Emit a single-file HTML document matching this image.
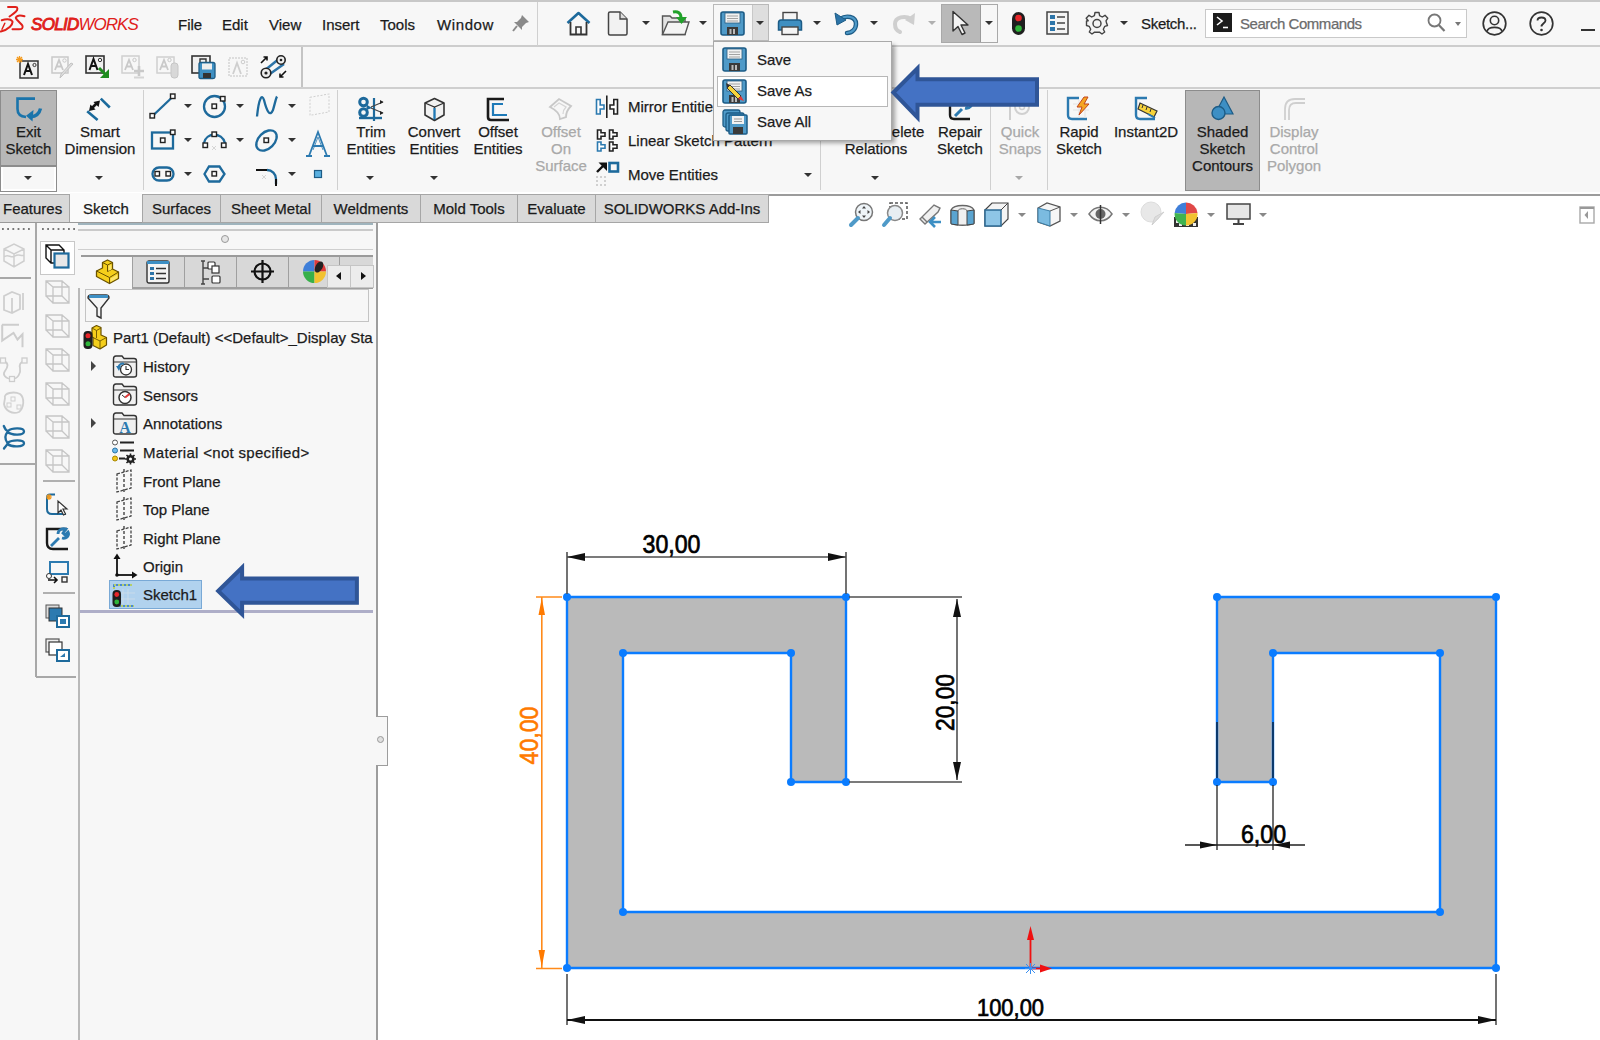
<!DOCTYPE html>
<html><head><meta charset="utf-8">
<style>
*{margin:0;padding:0;box-sizing:border-box}
html,body{width:1600px;height:1040px;overflow:hidden;background:#f7f7f7;font-family:"Liberation Sans",sans-serif;color:#1b1b1b}
.a{position:absolute}
.hl{position:absolute;height:1px;background:#c4c4c4}
.vl{position:absolute;width:1px;background:#c4c4c4}
.t{position:absolute;white-space:nowrap;font-size:15px;line-height:17px;-webkit-text-stroke:0.25px currentColor}
.c{text-align:center}
.g{color:#a9a9a9}
.dd{position:absolute;width:0;height:0;border-left:4px solid transparent;border-right:4px solid transparent;border-top:4px solid #333}
.tab{position:absolute;top:194px;height:29px;background:#d9d9d9;border:1px solid #a6a6a6;font-size:15px;line-height:27px;text-align:center;white-space:nowrap;-webkit-text-stroke:0.25px currentColor}
svg{position:absolute;overflow:visible}
</style></head><body>
<!-- top border -->
<div class="a" style="left:0;top:0;width:1600px;height:2px;background:#c8c8c8"></div>
<!-- top bar -->
<div class="hl" style="left:0;top:45px;width:1600px;height:2px;background:#cdcdcd"></div>
<div class="vl" style="left:537px;top:2px;height:44px;background:#d0d0d0"></div>
<!-- second row -->
<div class="vl" style="left:301px;top:47px;height:42px;width:2px;background:#c4c4c4"></div>
<div class="hl" style="left:0;top:87px;width:1600px;height:2px;background:#cfcfcf"></div>
<!-- ribbon bottom -->
<div class="hl" style="left:0;top:192px;width:1600px;height:2px;background:#fff"></div><div class="hl" style="left:0;top:194px;width:1600px;height:2px;background:#9c9c9c"></div>
<!-- graphics area -->
<div class="a" style="left:377px;top:196px;width:1223px;height:844px;background:#fff"></div>


<!-- ===== TOP BAR ===== -->
<svg style="left:0;top:0" width="30" height="36" viewBox="0 0 30 36">
 <g fill="none" stroke="#e0201a" stroke-linecap="round">
 <path d="M8 7 H15.5 C18 7 18 9.5 16 11.5 C14 13.5 11.5 15 9.5 16.5" stroke-width="1.9"/>
 <path d="M1.8 20.3 C5 19.2 10.5 18.6 12.3 21.2 C13.6 24.5 8 29.8 0.8 31.5" stroke-width="2"/>
 <path d="M4.8 23.2 L2 29.2" stroke-width="1.5"/>
 <path d="M24.5 16.3 C21.5 15.3 17.2 15 15.8 17.6 C16 20 21.2 23.2 22.4 25.6 C23.3 28 22 29.3 19 29.3 H12.5" stroke-width="2"/>
 </g>
</svg>
<div class="t" style="left:31px;top:15px;font-size:17px;line-height:20px;color:#e0201a;font-style:italic;letter-spacing:-1px;-webkit-text-stroke:0"><span style="-webkit-text-stroke:0.9px #e0201a;letter-spacing:-0.7px">SOLID</span>WORKS</div>
<div class="t" style="left:178px;top:16px">File</div>
<div class="t" style="left:222px;top:16px">Edit</div>
<div class="t" style="left:269px;top:16px">View</div>
<div class="t" style="left:322px;top:16px">Insert</div>
<div class="t" style="left:380px;top:16px">Tools</div>
<div class="t" style="left:437px;top:16px;letter-spacing:0.6px">Window</div>
<!-- pin -->
<svg style="left:512px;top:14px" width="18" height="18" viewBox="0 0 18 18">
 <path d="M10 1 L17 8 L14 9 L10 13 L10 16 L2 8 L5 8 L9 4 Z" fill="#8a8a8a"/><path d="M5 12 L1 17" stroke="#8a8a8a" stroke-width="2"/>
</svg>
<!-- home -->
<svg style="left:566px;top:11px" width="25" height="25" viewBox="0 0 25 25">
 <path d="M1.5 12 L12.5 2 L23.5 12" fill="none" stroke="#1d6a9c" stroke-width="2.6" stroke-linejoin="round"/>
 <path d="M4.5 11 V23.5 H20.5 V11" fill="none" stroke="#333" stroke-width="1.8"/>
 <path d="M10 23.5 V16 H15 V23.5" fill="none" stroke="#333" stroke-width="1.6"/>
</svg>
<!-- new doc -->
<svg style="left:607px;top:11px" width="22" height="25" viewBox="0 0 22 25">
 <path d="M1.5 2.5 Q1.5 1 3 1 H13 L20 8 V22.5 Q20 24 18.5 24 H3 Q1.5 24 1.5 22.5 Z" fill="#f2f2f2" stroke="#444" stroke-width="1.5"/>
 <path d="M13 1 V8 H20" fill="#ddd" stroke="#444" stroke-width="1.3"/>
</svg>
<div class="dd" style="left:642px;top:21px"></div>
<!-- open -->
<svg style="left:661px;top:10px" width="30" height="26" viewBox="0 0 30 26">
 <path d="M1.5 6 H9 L11 8 H24 V24.5 H1.5 Z" fill="#e3e3e3" stroke="#555" stroke-width="1.4"/>
 <path d="M1.5 24.5 L7 12 H28 L24 24.5 Z" fill="#f4f4f4" stroke="#555" stroke-width="1.4"/>
 <path d="M12 2 C17 1 20 3 20 8" fill="none" stroke="#21a12a" stroke-width="3"/>
 <path d="M15 7 L20.5 14 L26 7 Z" fill="#21a12a"/>
</svg>
<div class="dd" style="left:699px;top:21px"></div>
<!-- save button (pressed) -->
<div class="a" style="left:713px;top:4px;width:56px;height:37px;border:1px solid #b9b9b9;background:#f7f7f7"></div>
<div class="a" style="left:752px;top:5px;width:16px;height:35px;background:#dedede;border-left:1px solid #c8c8c8"></div>
<svg style="left:720px;top:11px" width="25" height="25" viewBox="0 0 25 25">
 <path d="M1 3 Q1 1 3 1 H22 Q24 1 24 3 V22 Q24 24 22 24 H3 Q1 24 1 22 Z" fill="#4f9ac8" stroke="#1d5c86" stroke-width="1.6"/>
 <rect x="5" y="2" width="15" height="10" fill="#f2f2f2" stroke="#2a5d80" stroke-width="0.8"/>
 <path d="M7 5 H18 M7 7.5 H18 M7 10 H18" stroke="#999" stroke-width="0.9"/>
 <rect x="7" y="16" width="11" height="8" fill="#3a3a3a"/>
 <rect x="9.5" y="18" width="2" height="5" fill="#bbb"/><rect x="13" y="18" width="2" height="5" fill="#bbb"/>
</svg>
<div class="dd" style="left:756px;top:21px"></div>
<!-- print -->
<svg style="left:777px;top:11px" width="26" height="25" viewBox="0 0 26 25">
 <rect x="6" y="1.5" width="14" height="9" fill="#f4f4f4" stroke="#444" stroke-width="1.4"/>
 <path d="M1.5 12 Q1.5 9 4 9 H22 Q24.5 9 24.5 12 V19 H1.5 Z" fill="#3e8fc2" stroke="#1d5c86" stroke-width="1.5"/>
 <rect x="5" y="16" width="16" height="7.5" fill="#f4f4f4" stroke="#444" stroke-width="1.4"/>
</svg>
<div class="dd" style="left:813px;top:21px"></div>
<!-- undo -->
<svg style="left:834px;top:11px" width="25" height="24" viewBox="0 0 25 24">
 <path d="M6 8 C12 4 22 5 22 13 C22 18 18 22 13 22" fill="none" stroke="#1d5c86" stroke-width="4.5" stroke-linecap="round"/>
 <path d="M6 8 C12 4 22 5 22 13 C22 18 18 22 13 22" fill="none" stroke="#4f9ac8" stroke-width="2.2" stroke-linecap="round"/>
 <path d="M1 2 L3 14 L12 9 Z" fill="#2c74a8" stroke="#1d5c86" stroke-width="1"/>
</svg>
<div class="dd" style="left:870px;top:21px"></div>
<!-- redo gray -->
<svg style="left:892px;top:11px" width="24" height="24" viewBox="0 0 24 24">
 <path d="M19 8 C13 4 3 6 3 13 C3 17 5 20 8 21" fill="none" stroke="#cfcfcf" stroke-width="4" stroke-linecap="round"/>
 <path d="M23 2 L22 14 L13 9 Z" fill="#cfcfcf"/>
</svg>
<div class="dd" style="left:928px;top:21px;border-top-color:#b0b0b0"></div>
<!-- select button -->
<div class="a" style="left:941px;top:4px;width:57px;height:39px;border:1px solid #a9a9a9;background:#f7f7f7"></div>
<div class="a" style="left:942px;top:5px;width:39px;height:37px;background:#b9b9b9;border-right:1px solid #9a9a9a"></div>
<svg style="left:951px;top:10px" width="20" height="26" viewBox="0 0 20 26">
 <path d="M2 1.5 V21 L7 16.5 L11 24.5 L14 23 L10 15 H17 Z" fill="#f4f4f4" stroke="#333" stroke-width="1.4" stroke-linejoin="round"/>
</svg>
<div class="dd" style="left:985px;top:21px"></div>
<!-- traffic light -->
<svg style="left:1011px;top:11px" width="15" height="25" viewBox="0 0 15 25">
 <rect x="1" y="1" width="13" height="23" rx="6.5" fill="#1f1f1f"/>
 <circle cx="7.5" cy="7" r="3.3" fill="#e8262a"/><circle cx="7.5" cy="17.5" r="3.3" fill="#2fb53a"/>
</svg>
<!-- list -->
<svg style="left:1046px;top:11px" width="23" height="24" viewBox="0 0 23 24">
 <rect x="1" y="1" width="21" height="22" fill="#f4f4f4" stroke="#444" stroke-width="1.5"/>
 <rect x="4" y="4" width="5" height="4" fill="#2c74a8"/><rect x="4" y="10" width="5" height="4" fill="#2c74a8"/><rect x="4" y="16" width="5" height="4" fill="#2c74a8"/>
 <path d="M11 6 H19 M11 12 H19 M11 18 H19" stroke="#444" stroke-width="1.5"/>
</svg>
<!-- gear -->
<svg style="left:1085px;top:11px" width="24" height="24" viewBox="0 0 24 24">
 <path d="M10 1.5 H14 L14.6 4.6 L17.3 6 L20 4.3 L22.8 7.2 L21 9.8 L21.7 12.6 L22.5 14.5 L19.8 15.3 L18.3 18.2 L19.7 21 L17 23 L14.4 21.2 H9.6 L7 23 L4.3 21 L5.7 18.2 L4.2 15.3 L1.5 14.5 V10 L3.2 9.8 L1.2 7.2 L4 4.3 L6.7 6 L9.4 4.6 Z" fill="#f4f4f4" stroke="#444" stroke-width="1.4" stroke-linejoin="round"/>
 <circle cx="12" cy="12.5" r="4" fill="none" stroke="#444" stroke-width="1.5"/>
</svg>
<div class="dd" style="left:1120px;top:21px"></div>
<div class="t" style="left:1141px;top:15px;letter-spacing:-0.3px">Sketch...</div>
<!-- search box -->
<div class="a" style="left:1205px;top:9px;width:262px;height:29px;background:#fff;border:1px solid #c9c9c9"></div>
<svg style="left:1213px;top:13px" width="19" height="19" viewBox="0 0 19 19">
 <rect x="0" y="0" width="19" height="19" fill="#1c1c1c"/>
 <path d="M4 4 L9 8 L4 12" fill="none" stroke="#fff" stroke-width="1.6"/><path d="M10 14.5 H15" stroke="#fff" stroke-width="1.6"/>
</svg>
<div class="t" style="left:1240px;top:15px;color:#6b6b6b;letter-spacing:-0.45px">Search Commands</div>
<svg style="left:1427px;top:13px" width="19" height="20" viewBox="0 0 19 20">
 <circle cx="7.5" cy="7.5" r="6" fill="none" stroke="#777" stroke-width="1.8"/><path d="M11.8 12 L17.5 18" stroke="#777" stroke-width="2.2"/>
</svg>
<div class="dd" style="left:1455px;top:22px;border-left-width:3.5px;border-right-width:3.5px;border-top-width:4px;border-top-color:#777"></div>
<!-- user -->
<svg style="left:1482px;top:11px" width="25" height="25" viewBox="0 0 25 25">
 <circle cx="12.5" cy="12.5" r="11.3" fill="none" stroke="#333" stroke-width="1.7"/>
 <circle cx="12.5" cy="9.5" r="4.2" fill="none" stroke="#333" stroke-width="1.6"/>
 <path d="M5 20.5 C6 15 19 15 20 20.5" fill="none" stroke="#333" stroke-width="1.6"/>
</svg>
<!-- help -->
<svg style="left:1529px;top:11px" width="25" height="25" viewBox="0 0 25 25">
 <circle cx="12.5" cy="12.5" r="11.3" fill="none" stroke="#333" stroke-width="1.7"/>
 <path d="M8.5 9.5 C8.5 5.5 16.5 5.5 16.5 9.5 C16.5 12 12.5 12.5 12.5 15.5" fill="none" stroke="#333" stroke-width="1.8"/>
 <circle cx="12.5" cy="19" r="1.3" fill="#333"/>
</svg>
<div class="a" style="left:1581px;top:29px;width:14px;height:2px;background:#333"></div>


<!-- ===== SECOND ROW ===== -->
<svg style="left:15px;top:55px" width="25" height="24" viewBox="0 0 25 24">
 <rect x="5" y="6" width="18" height="17" fill="#f0f0f0" stroke="#333" stroke-width="1.5"/>
 <path d="M9 20 L13 9 L17 20 M10.5 16 H15.5" fill="none" stroke="#111" stroke-width="2"/><circle cx="19.5" cy="10" r="1.6" fill="none" stroke="#333" stroke-width="1"/>
 <path d="M4.5 1 V8 M1 4.5 H8 M2 2 L7 7 M7 2 L2 7" stroke="#f39a1e" stroke-width="1.3"/>
</svg>
<svg style="left:51px;top:55px" width="24" height="24" viewBox="0 0 24 24">
 <rect x="1" y="2" width="16" height="16" fill="none" stroke="#c9c9c9" stroke-width="1.5"/>
 <path d="M4 15 L8 5 L12 15 M5.5 11.5 H10.5" fill="none" stroke="#c9c9c9" stroke-width="1.8"/><circle cx="13.5" cy="5.5" r="1.7" fill="none" stroke="#c9c9c9"/><path d="M22 9 L11 21 L9 23 L10 19 L20 8 Z" fill="#ddd" stroke="#c3c3c3" stroke-width="1"/>
</svg>
<svg style="left:85px;top:55px" width="25" height="24" viewBox="0 0 25 24">
 <rect x="1" y="1" width="18" height="17" fill="#f0f0f0" stroke="#333" stroke-width="1.6"/>
 <path d="M4.5 15 L8.5 4 L12.5 15 M6 11 H11" fill="none" stroke="#111" stroke-width="2"/><circle cx="15" cy="5" r="1.7" fill="none" stroke="#333" stroke-width="1"/>
 <path d="M14 13 L21 20" stroke="#1e8c1e" stroke-width="3"/><path d="M24 14 V23 H15 Z" fill="#1e8c1e"/>
</svg>
<svg style="left:121px;top:55px" width="24" height="24" viewBox="0 0 24 24">
 <rect x="1" y="1" width="17" height="17" fill="none" stroke="#d0d0d0" stroke-width="1.5"/>
 <path d="M4 15 L8 5 L12 15 M5.5 11.5 H10.5" fill="none" stroke="#c9c9c9" stroke-width="1.8"/><circle cx="13.5" cy="5" r="1.7" fill="none" stroke="#c9c9c9"/><path d="M13 16 H23 M18 11 V21" stroke="#c9c9c9" stroke-width="2.6"/><path d="M13 22.5 H23" stroke="#d5d5d5" stroke-width="2"/>
</svg>
<svg style="left:156px;top:55px" width="24" height="24" viewBox="0 0 24 24">
 <rect x="1" y="2" width="17" height="16" fill="none" stroke="#d0d0d0" stroke-width="1.5"/>
 <path d="M4 15 L8 5 L12 15 M5.5 11.5 H10.5" fill="none" stroke="#c9c9c9" stroke-width="1.8"/><circle cx="13.5" cy="5" r="1.7" fill="none" stroke="#c9c9c9"/><rect x="15" y="8" width="7" height="15" rx="3" fill="#d8d8d8" stroke="#c6c6c6"/>
</svg>
<svg style="left:191px;top:55px" width="25" height="24" viewBox="0 0 25 24">
 <rect x="1" y="1" width="18" height="17" fill="#f0f0f0" stroke="#333" stroke-width="1.6"/>
 <path d="M9 8 V4 H15 V8" fill="none" stroke="#333" stroke-width="1.4"/>
 <path d="M8 9 Q8 7.5 9.5 7.5 H22 Q24 7.5 24 9.5 V22 Q24 23.5 22 23.5 H9.5 Q8 23.5 8 22 Z" fill="#3e8fc2" stroke="#1d5c86" stroke-width="1.3"/>
 <rect x="11" y="8.5" width="10" height="6" fill="#eee"/><rect x="12" y="18" width="8" height="5" fill="#333"/>
</svg>
<svg style="left:226px;top:55px" width="24" height="24" viewBox="0 0 24 24">
 <rect x="3" y="3" width="18" height="18" fill="none" stroke="#d5d5d5" stroke-width="1.5" stroke-dasharray="2 1"/>
 <path d="M7 19 L11 8 L15 19" fill="none" stroke="#cfcfcf" stroke-width="1.8"/><circle cx="17" cy="7" r="1.8" fill="none" stroke="#ccc"/>
</svg>
<svg style="left:260px;top:54px" width="27" height="25" viewBox="0 0 27 25">
 <path d="M4 17 L20 4 M7 22 L24 10" stroke="#2c74a8" stroke-width="2.5"/>
 <circle cx="21" cy="6" r="4.2" fill="#eee" stroke="#222" stroke-width="1.6"/><circle cx="21" cy="6" r="1.3" fill="#222"/>
 <circle cx="6" cy="19" r="4.8" fill="#eee" stroke="#222" stroke-width="1.6"/><circle cx="6" cy="19" r="1.6" fill="#222"/>
 <path d="M1 9 L7 3 M3.5 3 H7 V6.5" fill="none" stroke="#111" stroke-width="1.6"/><path d="M26 17 L20 23 M20 19.5 V23 H23.5" fill="none" stroke="#111" stroke-width="1.6"/>
</svg>

<!-- ===== RIBBON ===== -->
<!-- Exit sketch -->
<div class="a" style="left:0;top:90px;width:57px;height:102px;border:1.5px solid #8c8c8c;background:#f7f7f7;box-shadow:inset 0 0 0 2px #fff"></div>
<div class="a" style="left:1px;top:91px;width:55px;height:76px;background:#b7b7b7;border-bottom:2px solid #8c8c8c"></div>
<svg style="left:16px;top:96px" width="26" height="26" viewBox="0 0 26 26">
 <path d="M19 2.6 H1.5 V13 C1.5 18 4 20.5 10 21" fill="none" stroke="#1a74ab" stroke-width="2.6"/>
 <path d="M10 19.8 L17.5 14 L16.5 25.5 Z" fill="#1a74ab"/><path d="M14.5 20.5 C19.5 21 23.5 17.5 24.5 12.5" fill="none" stroke="#1a74ab" stroke-width="3.4"/>
</svg>
<div class="t c" style="left:0;top:123px;width:57px">Exit</div>
<div class="t c" style="left:0;top:140px;width:57px">Sketch</div>
<div class="dd" style="left:24px;top:176px"></div>
<!-- Smart Dimension -->
<svg style="left:86px;top:96px" width="26" height="26" viewBox="0 0 26 26">
 <path d="M1.2 15.2 L11.6 24" stroke="#1a6a9c" stroke-width="2.6"/><path d="M14.8 2.6 L23.8 11.5" stroke="#1a6a9c" stroke-width="2.6"/>
 <path d="M6 12 L10.5 7.5" stroke="#111" stroke-width="2.6"/>
 <path d="M3 15 L9.6 13.6 L4.4 8.4 Z M14 4.5 L12.6 11.1 L7.4 5.9 Z" fill="#111"/>
</svg>
<div class="t c" style="left:60px;top:123px;width:80px">Smart</div>
<div class="t c" style="left:60px;top:140px;width:80px">Dimension</div>
<div class="dd" style="left:95px;top:176px"></div>
<div class="vl" style="left:143px;top:90px;height:100px;background:#d0d0d0"></div>

<!-- sketch tools grid -->
<svg style="left:148px;top:92px" width="190" height="98" viewBox="148 92 190 98">
 <g fill="none" stroke="#1e6a9c" stroke-width="2.3">
  <path d="M152 116.5 L173 96.5"/>
  <circle cx="214.5" cy="106.5" r="10.5"/>
  <path d="M257 116.5 C259 97 262 94 264 100 C267 112 270 117 273 110 C275 103 276 98 277 96.5"/>
  <rect x="152" y="132.5" width="21" height="16"/>
  <path d="M204 143 C206 132 222 132 225 143"/>
  <ellipse cx="266.5" cy="140.5" rx="12" ry="8" transform="rotate(-45 266.5 140.5)"/>
  <rect x="152.5" y="167.5" width="21" height="13" rx="6.5"/>
  <path d="M204.5 174 L209 166.5 H219.5 L224.5 174 L219.5 181.5 H209 Z"/>
  <path d="M267 170 C272 170 276 174 276 179 V184"/>
 </g>
 <g fill="#fff" stroke="#222" stroke-width="1.4">
  <rect x="150" y="113.5" width="4.5" height="4.5"/><rect x="170.5" y="94" width="4.5" height="4.5"/>
  <rect x="212" y="104" width="4.5" height="4.5"/><rect x="220.5" y="96.5" width="4.5" height="4.5"/>
  <rect x="170.5" y="130" width="4.5" height="4.5"/><rect x="160.5" y="138" width="4.5" height="4.5"/>
  <rect x="212" y="132" width="4.5" height="4.5"/><rect x="203" y="143" width="4.5" height="4.5"/><rect x="221.5" y="143" width="4.5" height="4.5"/>
  <rect x="264" y="138" width="4.5" height="4.5"/>
  <rect x="155" y="171.5" width="4.5" height="4.5"/><rect x="166" y="171.5" width="4.5" height="4.5"/>
  <rect x="212" y="171.5" width="4.5" height="4.5"/>
 </g>
 <path d="M256 170 H267" stroke="#111" stroke-width="2"/><path d="M276 179 V186" stroke="#111" stroke-width="2"/>
 <path d="M262 175 L266 179 M266 175 L262 179 M212 146 L216 150 M216 146 L212 150" stroke="#ccc" stroke-width="0.8"/>
 <rect x="310" y="97" width="19" height="18" fill="none" stroke="#cfcfcf" stroke-dasharray="2 1.5" transform="skewY(-10) translate(0 55)"/>
 <path d="M309 156 L318 132 L327 156 M306 156 H312 M324 156 H330 M313 146 H323" fill="none" stroke="#2c7ab0" stroke-width="1.8"/>
 <path d="M313 150 L318 137 L323 150" fill="none" stroke="#2c7ab0" stroke-width="0.8"/>
 <rect x="314.5" y="170.5" width="7" height="7" fill="#5ab0e0" stroke="#1d5c86" stroke-width="1.2"/>
</svg>
<div class="dd" style="left:184px;top:104px"></div><div class="dd" style="left:236px;top:104px"></div><div class="dd" style="left:288px;top:104px"></div>
<div class="dd" style="left:184px;top:138px"></div><div class="dd" style="left:236px;top:138px"></div><div class="dd" style="left:288px;top:138px"></div>
<div class="dd" style="left:184px;top:172px"></div><div class="dd" style="left:288px;top:172px"></div>
<div class="vl" style="left:337px;top:90px;height:100px;background:#d0d0d0"></div>

<!-- Trim / Convert / Offset -->
<svg style="left:358px;top:97px" width="26" height="26" viewBox="0 0 26 26">
 <path d="M16 1 V24" stroke="#1e6a9c" stroke-width="2.2"/><path d="M1 21 H24" stroke="#1e6a9c" stroke-width="2.4"/>
 <circle cx="5.5" cy="5" r="3.8" fill="none" stroke="#1e6a9c" stroke-width="3"/><circle cx="5.5" cy="15.5" r="3.8" fill="none" stroke="#1e6a9c" stroke-width="3"/>
 <path d="M8.5 7.5 L14 11 L8.5 13 Z" fill="#1e6a9c"/>
 <path d="M13 10 L25 5 M13 11 L25 16" stroke="#444" stroke-width="1.2"/><path d="M22 3 L25.5 5 L22 7 Z M22 14 L25.5 16 L22 18 Z" fill="#222"/>
</svg>
<div class="t c" style="left:336px;top:123px;width:70px">Trim</div>
<div class="t c" style="left:336px;top:140px;width:70px">Entities</div>
<div class="dd" style="left:366px;top:176px"></div>
<svg style="left:423px;top:97px" width="23" height="25" viewBox="0 0 23 25">
 <path d="M2 6 L11.5 1.5 L21 6 V18 L11.5 23.5 L2 18 Z" fill="#f2f2f2" stroke="#333" stroke-width="1.6" stroke-linejoin="round"/>
 <path d="M2 6 L11.5 10 L21 6 M11.5 10 V23.5" fill="none" stroke="#333" stroke-width="1.3"/><path d="M11.5 11 V22.5" stroke="#1e7ab8" stroke-width="2.2"/>
</svg>
<div class="t c" style="left:399px;top:123px;width:70px">Convert</div>
<div class="t c" style="left:399px;top:140px;width:70px">Entities</div>
<div class="dd" style="left:430px;top:176px"></div>
<svg style="left:486px;top:97px" width="25" height="25" viewBox="0 0 25 25">
 <path d="M18 2 H2 V20 Q2 23 5 23 H23" fill="none" stroke="#1a1a1a" stroke-width="2.6"/>
 <path d="M17 7 H7 V18 H21" fill="none" stroke="#1e7ab8" stroke-width="2.2"/>
</svg>
<div class="t c" style="left:463px;top:123px;width:70px">Offset</div>
<div class="t c" style="left:463px;top:140px;width:70px">Entities</div>
<!-- Offset on surface (gray) -->
<svg style="left:548px;top:97px" width="25" height="24" viewBox="0 0 25 24">
 <path d="M2 10 L11 2 L23 9 C20 12 18 15 18 20 L12 22 C12 17 8 13 2 10 Z" fill="none" stroke="#c8c8c8" stroke-width="1.8"/>
 <path d="M6 10 L11 6 L18 10 C16 12 15 14 15 17" fill="none" stroke="#d5d5d5" stroke-width="1.2"/>
</svg>
<div class="t c g" style="left:526px;top:123px;width:70px">Offset</div>
<div class="t c g" style="left:526px;top:140px;width:70px">On</div>
<div class="t c g" style="left:526px;top:157px;width:70px">Surface</div>
<!-- Mirror / Linear / Move -->
<svg style="left:595px;top:95px" width="25" height="24" viewBox="0 0 25 24">
 <path d="M11.8 0.5 V23" stroke="#222" stroke-width="1.6"/>
 <path d="M1.5 4.5 H5.2 V10 H9 V14 H5.2 V19 H1.5 Z" fill="#fff" stroke="#2c7ab0" stroke-width="1.6"/>
 <path d="M22.5 4.5 H18.8 V10 H15 V14 H18.8 V19 H22.5 Z" fill="#fff" stroke="#222" stroke-width="1.6"/>
</svg>
<div class="t" style="left:628px;top:98px">Mirror Entities</div>
<svg style="left:596px;top:129px" width="24" height="24" viewBox="0 0 24 24">
 <g fill="#fff" stroke-width="1.6">
 <path d="M1.5 1 H5 V3.8 H9 V7.2 H5 V10 H1.5 Z" stroke="#222"/><path d="M13.5 1 H17 V3.8 H21 V7.2 H17 V10 H13.5 Z" stroke="#222"/>
 <path d="M1.5 13 H5 V15.8 H9 V19.2 H5 V22 H1.5 Z" stroke="#2c7ab0"/><path d="M13.5 13 H17 V15.8 H21 V19.2 H17 V22 H13.5 Z" stroke="#222"/></g>
</svg>
<div class="t" style="left:628px;top:132px">Linear Sketch Pattern</div>
<svg style="left:595px;top:161px" width="25" height="27" viewBox="0 0 25 27">
 <path d="M2 11 L9.5 3.5" stroke="#111" stroke-width="2.4"/><path d="M3.5 1.5 H12 V10 Z" fill="#111"/>
 <rect x="14.5" y="2" width="8.5" height="8.5" fill="none" stroke="#1d6a9c" stroke-width="2.6"/>
 <g fill="#d0d0d0"><rect x="1" y="15" width="2" height="2"/><rect x="5" y="15" width="2" height="2"/><rect x="9" y="15" width="2" height="2"/><rect x="1" y="19" width="2" height="2"/><rect x="9" y="19" width="2" height="2"/><rect x="1" y="23" width="2" height="2"/><rect x="5" y="23" width="2" height="2"/><rect x="9" y="23" width="2" height="2"/></g>
</svg>
<div class="t" style="left:628px;top:166px">Move Entities</div>
<div class="dd" style="left:804px;top:173px"></div>
<div class="vl" style="left:820px;top:90px;height:100px;background:#d0d0d0"></div>
<!-- Display/Delete relations (partially hidden) -->
<svg style="left:862px;top:96px" width="25" height="25" viewBox="0 0 25 25">
 <rect x="3" y="3" width="19" height="19" fill="none" stroke="#2c7ab0" stroke-width="2"/>
</svg>
<div class="t c" style="left:826px;top:123px;width:100px">Display/Delete</div>
<div class="t c" style="left:836px;top:140px;width:80px">Relations</div>
<div class="dd" style="left:871px;top:176px"></div>
<!-- Repair sketch -->
<svg style="left:947px;top:96px" width="26" height="26" viewBox="0 0 26 26">
 <path d="M3 3 V19 Q3 23 7 23 H23" fill="none" stroke="#1a1a1a" stroke-width="2.4"/>
 <path d="M8 20 L15 13 M13 7 C13 3 18 1 22 3 L18 7 L20 9 L24 5 C26 9 23 13 18 12" fill="none" stroke="#2c7ab0" stroke-width="3"/>
</svg>
<div class="t c" style="left:920px;top:123px;width:80px">Repair</div>
<div class="t c" style="left:920px;top:140px;width:80px">Sketch</div>
<div class="vl" style="left:990px;top:90px;height:100px;background:#d0d0d0"></div>
<!-- Quick snaps gray -->
<svg style="left:1007px;top:96px" width="26" height="26" viewBox="0 0 26 26">
 <path d="M3 2 V24" stroke="#cfcfcf" stroke-width="2"/><circle cx="15" cy="11" r="7" fill="none" stroke="#d0d0d0" stroke-width="2"/><circle cx="15" cy="11" r="2.5" fill="none" stroke="#d0d0d0" stroke-width="1.5"/>
</svg>
<div class="t c g" style="left:980px;top:123px;width:80px">Quick</div>
<div class="t c g" style="left:980px;top:140px;width:80px">Snaps</div>
<div class="dd" style="left:1015px;top:176px;border-top-color:#a8a8a8"></div>
<div class="vl" style="left:1047px;top:90px;height:100px;background:#d0d0d0"></div>
<!-- Rapid Sketch -->
<svg style="left:1065px;top:96px" width="27" height="26" viewBox="0 0 27 26">
 <path d="M14 2 H3 V19 Q3 23 7 23 H22" fill="none" stroke="#2c7ab0" stroke-width="2.4"/>
 <path d="M8 8 H24 M8 14 H24 M14 4 V22 M20 4 V22" stroke="#e3e3e3" stroke-width="1"/>
 <path d="M19 1 L12 11 H17 L14 19 L24 8 H19 L23 1 Z" fill="#f5a623" stroke="#c2451c" stroke-width="1"/>
</svg>
<div class="t c" style="left:1044px;top:123px;width:70px">Rapid</div>
<div class="t c" style="left:1044px;top:140px;width:70px">Sketch</div>
<!-- Instant2D -->
<svg style="left:1133px;top:96px" width="27" height="26" viewBox="0 0 27 26">
 <path d="M14 2 H3 V19 Q3 23 7 23 H22" fill="none" stroke="#2c7ab0" stroke-width="2.4"/>
 <path d="M7 7 L24 15 L21 21 L5 13 Z" fill="#f7d33b" stroke="#333" stroke-width="1.2"/>
 <path d="M10 9 L9 12 M14 11 L13 14 M18 13 L17 16" stroke="#333" stroke-width="1"/><path d="M15 18 L22 22" stroke="#2c7ab0" stroke-width="2"/>
</svg>
<div class="t c" style="left:1110px;top:123px;width:72px">Instant2D</div>
<!-- Shaded sketch contours (pressed) -->
<div class="a" style="left:1185px;top:90px;width:75px;height:101px;background:#b7b7b7;border:1px solid #8c8c8c"></div>
<svg style="left:1210px;top:96px" width="26" height="26" viewBox="0 0 26 26">
 <path d="M14 1 L23 18 H5 Z" fill="#3d8fc4" stroke="#1d5c86" stroke-width="1.2"/>
 <circle cx="8.5" cy="17" r="6.5" fill="#3d8fc4" stroke="#1d5c86" stroke-width="1.4"/>
</svg>
<div class="t c" style="left:1185px;top:123px;width:75px">Shaded</div>
<div class="t c" style="left:1185px;top:140px;width:75px">Sketch</div>
<div class="t c" style="left:1185px;top:157px;width:75px">Contours</div>
<!-- Display control polygon gray -->
<svg style="left:1281px;top:96px" width="26" height="26" viewBox="0 0 26 26">
 <path d="M4 24 V13 Q4 3 14 3 H24 M8 24 V14 Q8 7 15 7 H24" fill="none" stroke="#cfcfcf" stroke-width="1.8"/>
</svg>
<div class="t c g" style="left:1258px;top:123px;width:72px">Display</div>
<div class="t c g" style="left:1258px;top:140px;width:72px">Control</div>
<div class="t c g" style="left:1258px;top:157px;width:72px">Polygon</div>


<!-- ===== TABS ===== -->
<div class="tab" style="left:-1px;width:71px;text-align:left;padding-left:3px">Features</div>
<div class="a" style="left:70px;top:193px;width:72px;height:29px;background:#fafafa"></div>
<div class="a" style="left:0;top:222px;width:377px;height:1.5px;background:#9a9a9a"></div>
<div class="t c" style="left:69px;top:200px;width:74px">Sketch</div>
<div class="tab" style="left:142px;width:79px">Surfaces</div>
<div class="tab" style="left:220px;width:102px">Sheet Metal</div>
<div class="tab" style="left:321px;width:100px">Weldments</div>
<div class="tab" style="left:420px;width:98px">Mold Tools</div>
<div class="tab" style="left:517px;width:79px">Evaluate</div>
<div class="tab" style="left:595px;width:174px">SOLIDWORKS Add-Ins</div>

<!-- ===== VIEW TOOLBAR ===== -->
<svg style="left:849px;top:202px" width="25" height="25" viewBox="0 0 25 25">
 <circle cx="15" cy="10" r="8.5" fill="#eef4f8" stroke="#777" stroke-width="1.5"/>
 <path d="M15 4 L13 6.5 H17 Z M15 16 L13 13.5 H17 Z M9 10 L11.5 8 V12 Z M21 10 L18.5 8 V12 Z" fill="#444"/>
 <path d="M9 16 L2 23" stroke="#4f9ac8" stroke-width="4" stroke-linecap="round"/>
</svg>
<svg style="left:882px;top:202px" width="26" height="25" viewBox="0 0 26 25">
 <rect x="8" y="1" width="17" height="16" fill="none" stroke="#555" stroke-width="1.5" stroke-dasharray="3 2"/>
 <circle cx="13" cy="11" r="7.5" fill="#e8eef2" stroke="#888" stroke-width="1.5"/>
 <path d="M8 16 L2 23" stroke="#4f9ac8" stroke-width="4" stroke-linecap="round"/>
</svg>
<svg style="left:917px;top:202px" width="25" height="25" viewBox="0 0 25 25">
 <path d="M3 17 L17 3 L23 6 L21 10 L8 22 Z" fill="#f0f0f0" stroke="#777" stroke-width="1.4"/>
 <path d="M5 15 L10 20" stroke="#777" stroke-width="1.4"/>
 <path d="M24 20 H14 M18 15 L13 20 L18 25" fill="none" stroke="#3d8fc4" stroke-width="2.6"/>
</svg>
<svg style="left:950px;top:203px" width="25" height="24" viewBox="0 0 25 24">
 <path d="M1 7 C4 1 21 1 24 7 V20 C21 23 4 23 1 20 Z" fill="#f0f0f0" stroke="#666" stroke-width="1.3"/>
 <path d="M1 7 V21 L8 22 V8 Z M17 8 V22 L24 21 V7 Z" fill="#5aa4d0" stroke="#444" stroke-width="1"/>
 <path d="M8 8 C8 5 17 5 17 8" fill="none" stroke="#666"/>
</svg>
<svg style="left:984px;top:202px" width="25" height="25" viewBox="0 0 25 25">
 <path d="M1 8 L8 1 H24 V17 L17 24 H1 Z" fill="#f4f4f4" stroke="#444" stroke-width="1.2"/>
 <rect x="1" y="8" width="16" height="16" fill="#8ec5e6" stroke="#2c6a94" stroke-width="1.5"/>
 <path d="M17 8 L24 1" stroke="#444"/>
</svg>
<div class="dd" style="left:1018px;top:213px;border-top-color:#888"></div>
<svg style="left:1037px;top:202px" width="24" height="25" viewBox="0 0 24 25">
 <path d="M1 6 L10 1 L23 5 V19 L13 24 L1 20 Z" fill="#f6f6f6" stroke="#555" stroke-width="1.3"/>
 <path d="M1 6 L13 9 V24 L1 20 Z" fill="#7bbbe0" stroke="#3d7fa8" stroke-width="1"/><path d="M13 9 L23 5" stroke="#555"/>
</svg>
<div class="dd" style="left:1070px;top:213px;border-top-color:#888"></div>
<svg style="left:1088px;top:204px" width="25" height="21" viewBox="0 0 25 21">
 <path d="M1 10 C7 1 18 1 24 10 C18 19 7 19 1 10 Z" fill="#f4f4f4" stroke="#777" stroke-width="1.5"/>
 <circle cx="12.5" cy="10" r="5" fill="#666"/><path d="M12.5 1 V20" stroke="#333" stroke-width="1.5"/>
</svg>
<div class="dd" style="left:1122px;top:213px;border-top-color:#888"></div>
<svg style="left:1140px;top:201px" width="26" height="26" viewBox="0 0 26 26">
 <circle cx="11" cy="11" r="10" fill="#e8e8e8" stroke="#ddd"/><path d="M24 11 L12 24 L15 16 Z" fill="#ddd" stroke="#d0d0d0"/>
</svg>
<svg style="left:1173px;top:201px" width="26" height="27" viewBox="0 0 26 27">
 <rect x="1" y="16" width="24" height="10" fill="#333"/>
 <path d="M3 19 h3 v3 h-3z M10 19 h3 v3 h-3z M17 19 h3 v3 h-3z M6 22 h3 v3 h-3z M13 22 h3 v3 h-3z M20 22 h3 v3 h-3z" fill="#eee"/>
 <path d="M13 13 L13 1.5 A11.5 11.5 0 0 0 1.6 12 Z" fill="#3f7fd9"/>
 <path d="M13 13 L13 1.5 A11.5 11.5 0 0 1 24.5 12 Z" fill="#e04848"/>
 <path d="M13 13 L1.6 12 A11.5 11.5 0 0 0 13 24.5 Z" fill="#3fb34f"/>
 <path d="M13 13 L24.5 12 A11.5 11.5 0 0 1 13 24.5 Z" fill="#f2c230"/>
</svg>
<div class="dd" style="left:1207px;top:213px;border-top-color:#888"></div>
<svg style="left:1226px;top:203px" width="25" height="23" viewBox="0 0 25 23">
 <rect x="1" y="1" width="23" height="15" fill="#e6e6e6" stroke="#444" stroke-width="1.5"/>
 <path d="M12.5 16 V20 M7 21 H18" stroke="#444" stroke-width="2"/>
</svg>
<div class="dd" style="left:1259px;top:213px;border-top-color:#888"></div>
<svg style="left:1579px;top:206px" width="16" height="18" viewBox="0 0 16 18">
 <rect x="1" y="1" width="14" height="16" fill="#fff" stroke="#a8a8a8" stroke-width="1.4"/><path d="M1 2 H15" stroke="#999" stroke-width="2"/>
 <path d="M5.5 9 L9 5 V13 Z" fill="#999"/>
</svg>

<!-- ===== LEFT PANEL ===== -->
<div class="a" style="left:0;top:223px;width:377px;height:817px;background:#f7f7f7"></div>
<div class="vl" style="left:376px;top:223px;height:494px;width:2px;background:#9d9d9d"></div>
<div class="vl" style="left:376px;top:765px;height:275px;width:2px;background:#9d9d9d"></div>
<div class="a" style="left:376px;top:716px;width:12px;height:50px;border:1.5px solid #9d9d9d;border-left:none;background:#f7f7f7"></div>
<div class="a" style="left:377px;top:736px;width:7px;height:7px;border-radius:50%;border:1px solid #999;background:#e0e0e0"></div>
<!-- strip 1 -->
<svg style="left:0;top:226px" width="36" height="6" viewBox="0 0 36 6"><path d="M2 3 H32" stroke="#777" stroke-width="1.8" stroke-dasharray="1.8 3.4"/></svg>
<div class="vl" style="left:35px;top:223px;height:454px;width:2px;background:#a8a8a8"></div>
<div class="hl" style="left:0;top:277px;width:31px;height:2px;background:#a8a8a8"></div>
<div class="hl" style="left:0;top:463px;width:35px;height:2px;background:#a8a8a8"></div>
<svg style="left:2px;top:243px" width="24" height="25" viewBox="0 0 24 25"><path d="M2 6 L12 1 L22 6 V18 L12 24 L2 18 Z M2 6 L12 11 L22 6 M12 11 V24 M2 14 C6 10 9 16 13 13 C17 10 19 14 22 12" fill="none" stroke="#cfcfcf" stroke-width="1.5"/></svg>
<svg style="left:2px;top:289px" width="24" height="25" viewBox="0 0 24 25"><path d="M2 7 L10 3 L18 6 V20 L10 24 L2 21 Z M10 9 V24 M21 4 V21" fill="none" stroke="#cfcfcf" stroke-width="1.8"/></svg>
<svg style="left:0;top:320px" width="30" height="30" viewBox="0 0 30 30"><path d="M2 4.8 H19 M2.2 4.8 V20.5 L13.5 12.8 L17.5 19.5 L22.5 14.3 V27.3" fill="none" stroke="#cdcdcd" stroke-width="2"/></svg>
<svg style="left:0;top:355px" width="30" height="30" viewBox="0 0 30 30"><path d="M4 6 C9 8 8 12 5 16 C2 20 6 24 12 24 C18 24 21 18 20 13 C19 9 21 7 24 6" fill="none" stroke="#cdcdcd" stroke-width="1.8"/><rect x="0.5" y="3" width="5" height="5" fill="#f7f7f7" stroke="#cdcdcd" stroke-width="1.3"/><rect x="22" y="3" width="5" height="5" fill="#f7f7f7" stroke="#cdcdcd" stroke-width="1.3"/><rect x="9.5" y="21.5" width="5" height="5" fill="#f7f7f7" stroke="#cdcdcd" stroke-width="1.3"/></svg>
<svg style="left:2px;top:390px" width="24" height="25" viewBox="0 0 24 25"><path d="M3 8 C1 3 12 1 18 4 C23 8 22 18 17 22 C10 25 3 20 2 14 Z" fill="none" stroke="#cfcfcf" stroke-width="1.8"/><rect x="9" y="7" width="4" height="4" fill="none" stroke="#cfcfcf"/><rect x="5" y="13" width="4" height="4" fill="none" stroke="#cfcfcf"/><rect x="15" y="15" width="4" height="4" fill="none" stroke="#cfcfcf"/></svg>
<svg style="left:0;top:415px" width="35" height="45" viewBox="0 0 35 45"><path d="M3.8 11 C5 14 6 15.5 8 16 C12 12.5 24 12.5 24 16.5 C24 20.5 12 20.5 7.5 17 C5 20 4.5 24 7.5 28 C12 24.5 24 24.5 24 28.2 C24 32 12 32.5 7.5 29 C6 31 5 32 4 33.5" fill="none" stroke="#1e6a9c" stroke-width="2.3" stroke-linecap="round"/></svg>
<!-- strip 2 -->
<svg style="left:40px;top:226px" width="38" height="6" viewBox="0 0 38 6"><path d="M2 3 H36" stroke="#777" stroke-width="1.8" stroke-dasharray="1.8 3.4"/></svg>
<div class="hl" style="left:36px;top:676px;width:40px;height:2px;background:#a8a8a8"></div>
<div class="vl" style="left:78px;top:288px;height:752px;width:2px;background:#b9b9b9"></div>
<div class="a" style="left:40px;top:241px;width:35px;height:34px;background:#fff;border:1px solid #c8c8c8"></div>
<svg style="left:45px;top:244px" width="25" height="26" viewBox="0 0 25 26">
 <path d="M1 1 H14 L19 6 V19 H6 L1 14 Z M1 1 L6 6 H19 M6 6 V19" fill="none" stroke="#111" stroke-width="1.4"/>
 <rect x="9.5" y="9.5" width="14" height="14" fill="#e8e8e8" stroke="#1e6a9c" stroke-width="2.2"/>
</svg>
<g id="cubes"></g>
<svg style="left:45px;top:280px" width="25" height="24" viewBox="0 0 25 24"><path d="M1 1 H17 V16 H1 Z M8 7 H24 V23 H8 Z M1 1 L8 7 M17 1 L24 7 M17 16 L24 23 M1 16 L8 23" fill="none" stroke="#c6c6c6" stroke-width="1.3"/></svg>
<svg style="left:45px;top:314px" width="25" height="24" viewBox="0 0 25 24"><path d="M1 1 H17 V16 H1 Z M8 7 H24 V23 H8 Z M1 1 L8 7 M17 1 L24 7 M17 16 L24 23 M1 16 L8 23" fill="none" stroke="#c6c6c6" stroke-width="1.3"/></svg>
<svg style="left:45px;top:348px" width="25" height="24" viewBox="0 0 25 24"><path d="M1 1 H17 V16 H1 Z M8 7 H24 V23 H8 Z M1 1 L8 7 M17 1 L24 7 M17 16 L24 23 M1 16 L8 23" fill="none" stroke="#c6c6c6" stroke-width="1.3"/></svg>
<svg style="left:45px;top:382px" width="25" height="24" viewBox="0 0 25 24"><path d="M1 1 H17 V16 H1 Z M8 7 H24 V23 H8 Z M1 1 L8 7 M17 1 L24 7 M17 16 L24 23 M1 16 L8 23" fill="none" stroke="#c6c6c6" stroke-width="1.3"/></svg>
<svg style="left:45px;top:415px" width="25" height="24" viewBox="0 0 25 24"><path d="M1 1 H17 V16 H1 Z M8 7 H24 V23 H8 Z M1 1 L8 7 M17 1 L24 7 M17 16 L24 23 M1 16 L8 23" fill="none" stroke="#c6c6c6" stroke-width="1.3"/></svg>
<svg style="left:45px;top:449px" width="25" height="24" viewBox="0 0 25 24"><path d="M1 1 H17 V16 H1 Z M8 7 H24 V23 H8 Z M1 1 L8 7 M17 1 L24 7 M17 16 L24 23 M1 16 L8 23" fill="none" stroke="#c6c6c6" stroke-width="1.3"/></svg>

<div class="hl" style="left:43px;top:480px;width:32px;height:2px;background:#b0b0b0"></div>
<div class="hl" style="left:43px;top:592px;width:32px;height:2px;background:#b0b0b0"></div>
<svg style="left:45px;top:493px" width="25" height="23" viewBox="0 0 25 23">
 <path d="M10 1.5 H5 Q2 1.5 2 4.5 V16 Q2 21 7 21 H21" fill="none" stroke="#1e6a9c" stroke-width="2"/>
 <path d="M4 1 V7 M1 4 H7 M2 2 L6 6 M6 2 L2 6" stroke="#f39a1e" stroke-width="1.2"/>
 <path d="M13 8 V20 L16 17 L18.5 22 L20.5 21 L18 16 H22 Z" fill="#fff" stroke="#333" stroke-width="1.2"/>
</svg>
<svg style="left:45px;top:527px" width="25" height="24" viewBox="0 0 25 24">
 <path d="M22 2 H2 V16 Q2 22 8 22 H23" fill="none" stroke="#1a1a1a" stroke-width="2.4"/>
 <path d="M6 19 L14 11 M13 7 C13 3 17 1 21 2 L18 6 L20 8 L23 5 C25 9 21 12 17 11" fill="none" stroke="#2c7ab0" stroke-width="2.8"/>
</svg>
<svg style="left:45px;top:560px" width="25" height="24" viewBox="0 0 25 24">
 <rect x="5" y="2" width="18" height="12" fill="none" stroke="#2c7ab0" stroke-width="2"/>
 <circle cx="4" cy="16" r="2.5" fill="#fff" stroke="#333"/><path d="M3 20 H12 M9 17 L12 20 L9 23" fill="none" stroke="#111" stroke-width="1.6"/><rect x="17" y="17" width="5" height="5" fill="none" stroke="#333" stroke-width="1.4"/>
</svg>
<svg style="left:45px;top:604px" width="25" height="24" viewBox="0 0 25 24">
 <rect x="1" y="1" width="13" height="13" fill="#ddd" stroke="#555"/><rect x="4" y="4" width="13" height="13" fill="#2c7ab0" stroke="#333"/>
 <rect x="12" y="12" width="12" height="11" fill="#fff" stroke="#1e6a9c" stroke-width="2"/><rect x="15" y="15" width="6" height="5" fill="#2c7ab0"/>
</svg>
<svg style="left:45px;top:638px" width="25" height="24" viewBox="0 0 25 24">
 <rect x="1" y="1" width="13" height="13" fill="#eee" stroke="#555" stroke-width="1.2"/><rect x="4" y="4" width="13" height="13" fill="#fff" stroke="#333" stroke-width="1.2"/>
 <rect x="12" y="12" width="12" height="11" fill="#fff" stroke="#1e6a9c" stroke-width="2"/><path d="M15 19 L20 15 V19 Z" fill="#2c7ab0"/>
</svg>

<!-- panel header -->
<div class="a" style="left:78px;top:223px;width:295px;height:2px;background:#9fb4bd"></div>
<div class="a" style="left:78px;top:229px;width:295px;height:1.5px;background:#cacaca"></div>
<div class="a" style="left:221px;top:235px;width:8px;height:8px;border-radius:50%;border:1px solid #999;background:#e6e6e6"></div>
<div class="a" style="left:78px;top:248.5px;width:295px;height:1.5px;background:#cfcfcf"></div>
<div class="a" style="left:81px;top:255px;width:292px;height:2px;background:#9a9a9a"></div>
<div class="a" style="left:132px;top:257px;width:241px;height:31px;background:#d8d8d8"></div>
<div class="vl" style="left:132px;top:257px;height:31px;background:#a0a0a0"></div>
<div class="vl" style="left:184px;top:257px;height:31px;background:#a0a0a0"></div>
<div class="vl" style="left:236px;top:257px;height:31px;background:#a0a0a0"></div>
<div class="vl" style="left:288px;top:257px;height:31px;background:#a0a0a0"></div>
<div class="vl" style="left:339px;top:257px;height:31px;background:#a0a0a0"></div>
<div class="a" style="left:132px;top:287px;width:241px;height:2px;background:#a0a0a0"></div>
<svg style="left:95px;top:259px" width="25" height="26" viewBox="0 0 25 26">
 <path d="M1.5 12 L7.5 9 V3.5 L12.5 1 L17.5 3.5 V10 L23.5 13 V19.5 L14.5 24.5 L1.5 17.5 Z" fill="#f5cf1b" stroke="#6b5300" stroke-width="1.3" stroke-linejoin="round"/>
 <path d="M7.5 3.5 L12.5 6 L17.5 3.5 M12.5 6 V12.5 M1.5 12 L14.5 18.5 L23.5 13 M14.5 18.5 V24.5 M12.5 12.5 L17.5 10" fill="none" stroke="#6b5300" stroke-width="1"/>
 <path d="M13.5 7 L16.5 5.5 V10.5 L13.5 12 Z M15.5 19.5 L22.5 15.5 V19 L15.5 23 Z" fill="#fbe46a"/>
</svg>
<svg style="left:146px;top:260px" width="24" height="24" viewBox="0 0 24 24">
 <rect x="1" y="1" width="22" height="22" rx="2" fill="#f4f4f4" stroke="#333" stroke-width="1.4"/><rect x="1" y="1" width="22" height="3" fill="#3d8fc4"/>
 <rect x="4" y="7" width="4" height="3" fill="#2c74a8"/><rect x="4" y="12" width="4" height="3" fill="#2c74a8"/><rect x="4" y="17" width="4" height="3" fill="#2c74a8"/>
 <path d="M10 8.5 H20 M10 13.5 H20 M10 18.5 H20" stroke="#333" stroke-width="1.3"/>
</svg>
<svg style="left:200px;top:260px" width="22" height="25" viewBox="0 0 22 25">
 <path d="M3 1 V24 M3 8 H9 M3 19 H9 M1 1 H5 M1 24 H5" fill="none" stroke="#444" stroke-width="1.4"/>
 <rect x="8" y="2" width="7" height="7" rx="1" fill="#fff" stroke="#333" stroke-width="1.2"/><rect x="12" y="6" width="7" height="7" fill="#fff" stroke="#333" stroke-width="1.2"/>
 <rect x="12" y="16" width="8" height="7" rx="1" fill="#fff" stroke="#333" stroke-width="1.2"/>
</svg>
<svg style="left:250px;top:259px" width="25" height="25" viewBox="0 0 25 25">
 <circle cx="12.5" cy="12.5" r="8" fill="none" stroke="#111" stroke-width="2.2"/><path d="M12.5 1 V24 M1 12.5 H24" stroke="#111" stroke-width="2.2"/>
</svg>
<svg style="left:302px;top:259px" width="25" height="25" viewBox="0 0 25 25">
 <path d="M12.5 12.5 L12.5 1 A11.5 11.5 0 0 0 1 12.5 Z" fill="#3f7fd9"/><path d="M12.5 12.5 L12.5 1 A11.5 11.5 0 0 1 24 12.5 Z" fill="#e03a3a"/>
 <path d="M12.5 12.5 L1 12.5 A11.5 11.5 0 0 0 12.5 24 Z" fill="#38b04a"/><path d="M12.5 12.5 L24 12.5 A11.5 11.5 0 0 1 12.5 24 Z" fill="#f2c230"/>
 <ellipse cx="17" cy="8" rx="3.5" ry="6" transform="rotate(30 17 8)" fill="#222"/>
</svg>
<div class="a" style="left:327px;top:265px;width:24px;height:23px;background:#ececec;border:1px solid #c5c5c5"></div>
<div class="a" style="left:350px;top:265px;width:24px;height:23px;background:#ececec;border:1px solid #c5c5c5"></div>
<div class="a" style="left:336px;top:272px;width:0;height:0;border-top:4.5px solid transparent;border-bottom:4.5px solid transparent;border-right:5px solid #111"></div>
<div class="a" style="left:361px;top:272px;width:0;height:0;border-top:4.5px solid transparent;border-bottom:4.5px solid transparent;border-left:5px solid #111"></div>
<!-- filter box -->
<div class="a" style="left:85px;top:289px;width:284px;height:33px;border:1px solid #c4c4c4;background:#f7f7f7"></div>
<svg style="left:87px;top:294px" width="24" height="26" viewBox="0 0 24 26">
 <path d="M1 4 Q1 1 4 1 H19 Q22 1 22 4 L14 14 V24 L10 22 V14 Z" fill="#f4f4f4" stroke="#333" stroke-width="1.4"/>
 <path d="M2 2.5 H21" stroke="#3d8fc4" stroke-width="3"/>
</svg>


<!-- ===== FEATURE TREE ===== -->
<svg style="left:83px;top:324px" width="25" height="26" viewBox="0 0 25 26">
 <path d="M9 4 L13.5 1.5 L18 3.5 V11 L23.5 13.5 V21 L17 25 L10 21.5 V13.5 L9 13 Z" fill="#f5cf1b" stroke="#6b5300" stroke-width="1.2" stroke-linejoin="round"/>
 <path d="M9 4 L13.5 6.5 L18 4 M13.5 6.5 V14 M10 13.5 L17 17 L23.5 13.5 M17 17 V25" fill="none" stroke="#6b5300" stroke-width="0.9"/>
 <rect x="0.5" y="7" width="9" height="18" rx="4" fill="#1f1f1f"/><circle cx="5" cy="11.8" r="2.5" fill="#e8262a"/><circle cx="5" cy="19.8" r="2.5" fill="#2fb53a"/>
</svg>
<div class="t" style="left:113px;top:329px;width:263px;overflow:hidden">Part1 (Default) &lt;&lt;Default&gt;_Display Sta</div>
<!-- History -->
<div class="a" style="left:91px;top:361px;width:0;height:0;border-top:5px solid transparent;border-bottom:5px solid transparent;border-left:5px solid #444"></div>
<svg style="left:112px;top:355px" width="26" height="23" viewBox="0 0 26 23">
 <path d="M1.5 4 Q1.5 1 4 1 H10 L12 3.5 H22 Q24.5 3.5 24.5 6 V20 Q24.5 22 22 22 H4 Q1.5 22 1.5 20 Z" fill="#f0f0f0" stroke="#333" stroke-width="1.4"/>
 <path d="M1.5 7 H24.5" stroke="#333" stroke-width="1"/>
 <circle cx="14" cy="14.5" r="5.5" fill="#fff" stroke="#333" stroke-width="1.3"/><path d="M14 11 V14.5 H17" fill="none" stroke="#333" stroke-width="1.1"/>
 <path d="M6 13 C7 9 10 8 12 9" fill="none" stroke="#2c7ab0" stroke-width="2"/><path d="M4 11 L7 16 L9 11 Z" fill="#2c7ab0"/>
</svg>
<div class="t" style="left:143px;top:358px">History</div>
<!-- Sensors -->
<svg style="left:112px;top:383px" width="26" height="23" viewBox="0 0 26 23">
 <path d="M1.5 4 Q1.5 1 4 1 H10 L12 3.5 H22 Q24.5 3.5 24.5 6 V20 Q24.5 22 22 22 H4 Q1.5 22 1.5 20 Z" fill="#f0f0f0" stroke="#333" stroke-width="1.4"/>
 <path d="M1.5 7 H24.5" stroke="#333" stroke-width="1"/>
 <circle cx="13" cy="14.5" r="6" fill="#fff" stroke="#333" stroke-width="1.5"/><path d="M13 14.5 L17.5 11" stroke="#e03a3a" stroke-width="2.2"/><path d="M10 12 L13 14.5" stroke="#333" stroke-width="1"/>
</svg>
<div class="t" style="left:143px;top:387px">Sensors</div>
<!-- Annotations -->
<div class="a" style="left:91px;top:418px;width:0;height:0;border-top:5px solid transparent;border-bottom:5px solid transparent;border-left:5px solid #444"></div>
<svg style="left:112px;top:412px" width="26" height="23" viewBox="0 0 26 23">
 <path d="M1.5 4 Q1.5 1 4 1 H10 L12 3.5 H22 Q24.5 3.5 24.5 6 V20 Q24.5 22 22 22 H4 Q1.5 22 1.5 20 Z" fill="#f0f0f0" stroke="#333" stroke-width="1.4"/>
 <path d="M1.5 7 H24.5" stroke="#333" stroke-width="1"/>
 <text x="13" y="21" font-family="Liberation Serif" font-size="16" font-weight="bold" fill="#2c7ab0" text-anchor="middle">A</text>
</svg>
<div class="t" style="left:143px;top:415px">Annotations</div>
<!-- Material -->
<svg style="left:111px;top:439px" width="27" height="26" viewBox="0 0 27 26">
 <circle cx="4" cy="3.5" r="2.5" fill="#fff" stroke="#555" stroke-width="1"/><circle cx="4" cy="11.5" r="2.5" fill="#6bb8e8" stroke="#2c74a8" stroke-width="1"/><circle cx="4" cy="19.5" r="2.5" fill="#f2c518" stroke="#a88700" stroke-width="1"/>
 <path d="M9 3.5 H23 M9 11.5 H23 M8 19.5 H14" stroke="#222" stroke-width="1.8"/>
 <circle cx="19.5" cy="20" r="4" fill="#222"/><path d="M19.5 14.5 V25.5 M14 20 H25 M15.5 16 L23.5 24 M23.5 16 L15.5 24" stroke="#222" stroke-width="1.6"/><circle cx="19.5" cy="20" r="1.5" fill="#fff"/>
</svg>
<div class="t" style="left:143px;top:444px;letter-spacing:0.3px">Material &lt;not specified&gt;</div>
<svg style="left:115px;top:469px" width="20" height="25" viewBox="0 0 20 25">
 <path d="M2 5 L16 1 V19 L2 23 Z" fill="none" stroke="#444" stroke-width="1.3" stroke-dasharray="3 1.5"/><path d="M9 0 V24" stroke="#444" stroke-width="1.4" stroke-dasharray="3 2"/>
</svg>
<div class="t" style="left:143px;top:473px">Front Plane</div>
<svg style="left:115px;top:497px" width="20" height="25" viewBox="0 0 20 25">
 <path d="M2 5 L16 1 V19 L2 23 Z" fill="none" stroke="#444" stroke-width="1.3" stroke-dasharray="3 1.5"/><path d="M9 0 V24" stroke="#444" stroke-width="1.4" stroke-dasharray="3 2"/>
</svg>
<div class="t" style="left:143px;top:501px">Top Plane</div>
<svg style="left:115px;top:526px" width="20" height="25" viewBox="0 0 20 25">
 <path d="M2 5 L16 1 V19 L2 23 Z" fill="none" stroke="#444" stroke-width="1.3" stroke-dasharray="3 1.5"/><path d="M9 0 V24" stroke="#444" stroke-width="1.4" stroke-dasharray="3 2"/>
</svg>
<div class="t" style="left:143px;top:530px">Right Plane</div>

<svg style="left:112px;top:553px" width="26" height="25" viewBox="0 0 26 25">
 <path d="M5 23 V4" stroke="#111" stroke-width="1.8"/><path d="M5 0.5 L1.5 6 H8.5 Z" fill="#111"/>
 <path d="M5 22 H22" stroke="#111" stroke-width="1.8"/><path d="M25.5 22 L20 18.5 V25.5 Z" fill="#111"/><circle cx="5" cy="22" r="1.8" fill="#111"/>
</svg>
<div class="t" style="left:143px;top:558px">Origin</div>
<!-- Sketch1 highlight -->
<div class="a" style="left:109px;top:580px;width:93px;height:29px;background:#b1d2ee;border:1px solid #79a9d6"></div>
<svg style="left:111px;top:582px" width="28" height="26" viewBox="0 0 28 26">
 <path d="M3 7 V3 H21 M6 24 H23" fill="none" stroke="#2a72c8" stroke-width="1.6"/><path d="M3 7 V3 H21 M6 24 H23" fill="none" stroke="#d7e64a" stroke-width="1.6" stroke-dasharray="2 2"/>
 <path d="M12 7 V22 M17 7 V22 M8 11 H24 M8 17 H24" stroke="#cfdde8" stroke-width="0.8"/>
 <rect x="1.5" y="8" width="8.5" height="17" rx="4" fill="#1f1f1f"/><circle cx="5.75" cy="12.5" r="2.4" fill="#e8262a"/><circle cx="5.75" cy="20" r="2.4" fill="#2fb53a"/>
</svg>
<div class="t" style="left:143px;top:586px">Sketch1</div>
<div class="a" style="left:80px;top:610px;width:293px;height:3px;background:#aeaec8"></div>


<!-- ===== GRAPHICS: SKETCH ===== -->
<svg style="left:0;top:0" width="1600" height="1040" viewBox="0 0 1600 1040">
 <path fill="#bababa" fill-rule="evenodd" d="M567 597 H846 V782 H791 V653 H623 V912 H1440 V653 H1273 V782 H1217 V597 H1496 V968 H567 Z"/>
 <g fill="none" stroke="#0a7cff" stroke-width="2.4" stroke-linecap="square">
  <path d="M567 597 H846 V782 H791 V653 H623 V912 H1440 V653 H1273 V782 H1217 V597 H1496 V968 H567 Z"/>
 </g>
 <path d="M1217 722 V782 M1273 722 V782" stroke="#0d2a4a" stroke-width="1.6"/>
 <g fill="#0a7cff">
  <circle cx="567" cy="597" r="4"/><circle cx="846" cy="597" r="4"/><circle cx="846" cy="782" r="4"/><circle cx="791" cy="782" r="4"/>
  <circle cx="791" cy="653" r="4"/><circle cx="623" cy="653" r="4"/><circle cx="623" cy="912" r="4"/><circle cx="1440" cy="912" r="4"/>
  <circle cx="1440" cy="653" r="4"/><circle cx="1273" cy="653" r="4"/><circle cx="1273" cy="782" r="4"/><circle cx="1217" cy="782" r="4"/>
  <circle cx="1217" cy="597" r="4"/><circle cx="1496" cy="597" r="4"/><circle cx="1496" cy="968" r="4"/><circle cx="567" cy="968" r="4"/>
 </g>
 <!-- 30,00 -->
 <g stroke="#505050" stroke-width="1.6" fill="none">
  <path d="M567 552 V594 M846 552 V594 M567 557 H846"/>
  <path d="M849 597 H962 M849 782 H962 M957 599 V780"/>
  <path d="M567 974 V1025 M1496 974 V1025"/>
 </g>
 <path d="M567 557 L585 553 V561 Z M846 557 L828 553 V561 Z" fill="#111"/>
 <path d="M957 599 L953 617 H961 Z M957 780 L953 762 H961 Z" fill="#111"/>
 <path d="M567 1020 H1496" stroke="#111" stroke-width="1.8"/>
 <path d="M567 1020 L585 1016 V1024 Z M1496 1020 L1478 1016 V1024 Z" fill="#111"/>
 <!-- 6,00 -->
 <path d="M1217 785 V850 M1273 785 V850 M1185 845 H1305" stroke="#222" stroke-width="1.3" fill="none"/>
 <path d="M1217 845 L1200 841.5 V848.5 Z M1273 845 L1290 841.5 V848.5 Z" fill="#111"/>
 <!-- 40,00 orange -->
 <path d="M536 597 H562 M536 968.5 H562 M541.8 597 V968" stroke="#ff8a1a" stroke-width="1.6" fill="none"/>
 <path d="M541.8 598 L538.5 615 H545 Z M541.8 967 L538.5 950 H545 Z" fill="#ff7a00"/>
 <!-- origin -->
 <path d="M1030.5 968.5 V940" stroke="#f01010" stroke-width="1.8"/><path d="M1030.5 926 L1027 940 H1034 Z" fill="#f01010"/>
 <path d="M1030.5 968.5 H1042" stroke="#f01010" stroke-width="1.8"/><path d="M1052 968.5 L1040 964.5 V972.5 Z" fill="#f01010"/>
 <path d="M1026 964 L1035 973 M1035 964 L1026 973 M1030.5 963 V974 M1025 968.5 H1036" stroke="#3a8ff0" stroke-width="1"/>
 <text x="671.5" y="553" font-family="Liberation Sans" font-size="26" fill="#000" stroke="#000" stroke-width="0.7" text-anchor="middle" textLength="58" lengthAdjust="spacingAndGlyphs">30,00</text>
 <text x="1010.5" y="1015.5" font-family="Liberation Sans" font-size="24" fill="#000" stroke="#000" stroke-width="0.7" text-anchor="middle" textLength="67" lengthAdjust="spacingAndGlyphs">100,00</text>
 <text x="1263.5" y="842.5" font-family="Liberation Sans" font-size="26" fill="#000" stroke="#000" stroke-width="0.7" text-anchor="middle" textLength="45" lengthAdjust="spacingAndGlyphs">6,00</text>
 <text transform="translate(954 702.5) rotate(-90)" x="0" y="0" font-family="Liberation Sans" font-size="26" fill="#000" stroke="#000" stroke-width="0.7" text-anchor="middle" textLength="57" lengthAdjust="spacingAndGlyphs">20,00</text>
 <text transform="translate(538 735.5) rotate(-90)" x="0" y="0" font-family="Liberation Sans" font-size="26" fill="#ff7a00" stroke="#ff7a00" stroke-width="0.6" text-anchor="middle" textLength="58" lengthAdjust="spacingAndGlyphs">40,00</text>
</svg>

<!-- ===== SAVE DROPDOWN MENU ===== -->
<div class="a" style="left:716px;top:45px;width:179px;height:98px;background:rgba(0,0,0,0.35);filter:blur(2px)"></div>
<div class="a" style="left:713px;top:41px;width:179px;height:100px;background:#f7f7f7;border:1px solid #a9a9a9"></div>
<div class="a" style="left:717px;top:76px;width:171px;height:31px;background:#fff;border:1px solid #b7b7b7"></div>
<svg style="left:722px;top:47px" width="25" height="25" viewBox="0 0 25 25">
 <path d="M1 3 Q1 1 3 1 H22 Q24 1 24 3 V22 Q24 24 22 24 H3 Q1 24 1 22 Z" fill="#4f9ac8" stroke="#1d5c86" stroke-width="1.6"/>
 <rect x="5" y="2" width="15" height="10" fill="#f2f2f2" stroke="#2a5d80" stroke-width="0.8"/>
 <path d="M7 5 H18 M7 7.5 H18 M7 10 H18" stroke="#999" stroke-width="0.9"/>
 <rect x="7" y="16" width="11" height="8" fill="#3a3a3a"/>
 <rect x="9.5" y="18" width="2" height="5" fill="#bbb"/><rect x="13" y="18" width="2" height="5" fill="#bbb"/>
</svg><svg style="left:722px;top:79px" width="25" height="25" viewBox="0 0 25 25">
 <path d="M1 3 Q1 1 3 1 H22 Q24 1 24 3 V22 Q24 24 22 24 H3 Q1 24 1 22 Z" fill="#4f9ac8" stroke="#1d5c86" stroke-width="1.6"/>
 <rect x="5" y="2" width="15" height="10" fill="#f2f2f2" stroke="#2a5d80" stroke-width="0.8"/>
 <path d="M7 5 H18 M7 7.5 H18 M7 10 H18" stroke="#999" stroke-width="0.9"/>
 <rect x="7" y="16" width="11" height="8" fill="#3a3a3a"/>
 <rect x="9.5" y="18" width="2" height="5" fill="#bbb"/><rect x="13" y="18" width="2" height="5" fill="#bbb"/><path d="M8 6 L19 17 L16 20 L5 9 Z" fill="#f7d33b" stroke="#333" stroke-width="1"/><path d="M16 20 L19 17 L22 22 Z" fill="#e03a3a"/><path d="M5 9 L4 4 L8 6 Z" fill="#333"/>
</svg><svg style="left:722px;top:109px" width="26" height="26" viewBox="0 0 26 26">
 <rect x="1" y="1" width="17" height="17" rx="2" fill="#4f9ac8" stroke="#1d5c86" stroke-width="1.3"/>
 <rect x="4" y="4" width="18" height="18" rx="2" fill="#4f9ac8" stroke="#1d5c86" stroke-width="1.3"/>
 <path d="M7 7 Q7 6 8 6 H24 Q25 6 25 7 V24 Q25 25 24 25 H8 Q7 25 7 24 Z" fill="#4f9ac8" stroke="#1d5c86" stroke-width="1.5"/>
 <rect x="10" y="7" width="12" height="8" fill="#f2f2f2"/><path d="M12 10 H20 M12 12.5 H20" stroke="#999"/><rect x="11" y="18" width="10" height="7" fill="#3a3a3a"/>
</svg>
<div class="t" style="left:757px;top:51px">Save</div>
<div class="t" style="left:757px;top:82px">Save As</div>
<div class="t" style="left:757px;top:113px">Save All</div>

<!-- ===== BLUE ARROWS ===== -->
<svg style="left:0;top:0" width="1600" height="1040" viewBox="0 0 1600 1040">
 <path d="M893.4 92.5 L917.5 68.3 V79.3 H1037 V104.8 H917.5 V117.6 Z" fill="#4472c4" stroke="#2f5597" stroke-width="4" stroke-linejoin="miter" stroke-miterlimit="6"/>
 <path d="M218.2 591 L242.1 567.6 V578.6 H356.9 V602.7 H242.1 V614.2 Z" fill="#4472c4" stroke="#2f5597" stroke-width="4" stroke-linejoin="miter" stroke-miterlimit="6"/>
</svg>

</body></html>
